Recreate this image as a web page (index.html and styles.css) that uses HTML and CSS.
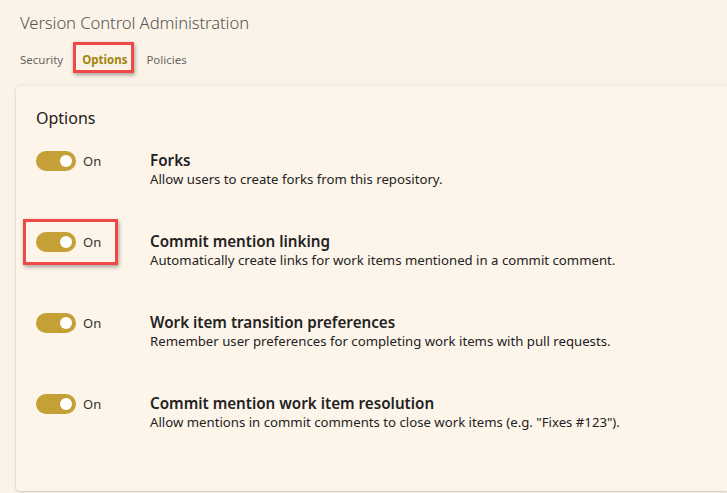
FILE: index.html
```html
<!DOCTYPE html>
<html>
<head>
<meta charset="utf-8">
<link rel="stylesheet" href="styles.css">
</head>
<body>
<div class="page">
  <h1 class="title">Version Control Administration</h1>
  <nav class="tabs">
    <span class="tab">Security</span>
    <span class="tab active">Options<span class="mark mark-tab"></span></span>
    <span class="tab">Policies</span>
  </nav>
  <section class="card">
    <h2 class="card-title">Options</h2>
    <div class="row">
      <div class="toggle-col"><span class="toggle"><span class="knob"></span></span><span class="on">On</span></div>
      <div class="text-col">
        <div class="opt-title">Forks</div>
        <div class="opt-desc">Allow users to create forks from this repository.</div>
      </div>
    </div>
    <div class="row">
      <div class="toggle-col"><span class="toggle"><span class="knob"></span></span><span class="on">On</span><span class="mark mark-toggle"></span></div>
      <div class="text-col">
        <div class="opt-title">Commit mention linking</div>
        <div class="opt-desc">Automatically create links for work items mentioned in a commit comment.</div>
      </div>
    </div>
    <div class="row">
      <div class="toggle-col"><span class="toggle"><span class="knob"></span></span><span class="on">On</span></div>
      <div class="text-col">
        <div class="opt-title">Work item transition preferences</div>
        <div class="opt-desc">Remember user preferences for completing work items with pull requests.</div>
      </div>
    </div>
    <div class="row">
      <div class="toggle-col"><span class="toggle"><span class="knob"></span></span><span class="on">On</span></div>
      <div class="text-col">
        <div class="opt-title">Commit mention work item resolution</div>
        <div class="opt-desc">Allow mentions in commit comments to close work items (e.g. "Fixes #123").</div>
      </div>
    </div>
  </section>
</div>
</body>
</html>
```
FILE: styles.css
```css
* { box-sizing: border-box; }
html, body { margin: 0; padding: 0; }
body {
  background: #fbf3e7;
  font-family: "Noto Sans", "Open Sans", sans-serif;
  color: #222;
  width: 727px;
  height: 493px;
  overflow: hidden;
}
.page {
  display: flex;
  flex-direction: column;
  height: 493px;
}
.title {
  margin: 0;
  padding: 11px 0 0 20px;
  font-size: 16.7px;
  font-weight: 300;
  color: #555;
  line-height: 24px;
  letter-spacing: -0.1px;
}
.tabs {
  display: flex;
  gap: 0;
  padding: 17px 0 0 20px;
  height: 51px;
  font-size: 11.5px;
  line-height: 16px;
}
.tab {
  position: relative;
  color: #666;
  margin-right: 19px;
}
.tab.active {
  font-weight: 700;
  color: #a3820f;
}
.mark {
  position: absolute;
  border: 3px solid #f04848;
  box-shadow: 1px 2px 4px rgba(0,0,0,0.35);
  pointer-events: none;
}
.mark-tab {
  left: -9px;
  top: -10px;
  width: 61px;
  height: 31px;
}
.card {
  margin-left: 16px;
  flex: 1;
  margin-bottom: 2px;
  background: #fdf5ea;
  border-radius: 4px 0 0 4px;
  box-shadow: 0 0 3px rgba(0,0,0,0.12), 0 1px 2px rgba(0,0,0,0.12);
  padding: 20px 0 0 20px;
}
.card-title {
  margin: 0 0 17px 0;
  font-size: 16px;
  font-weight: 400;
  line-height: 24px;
  color: #222;
}
.row {
  display: flex;
  align-items: flex-start;
  height: 81px;
}
.toggle-col {
  position: relative;
  width: 114px;
  display: flex;
  align-items: center;
  height: 20px;
  margin-top: 4px;
}
.toggle {
  width: 40px;
  height: 20px;
  border-radius: 10px;
  background: #c4a036;
  display: flex;
  align-items: center;
  justify-content: flex-end;
  padding-right: 4px;
}
.knob {
  width: 12px;
  height: 12px;
  border-radius: 50%;
  background: #fff;
}
.on {
  margin-left: 7px;
  font-size: 13px;
  color: #333;
}
.mark-toggle {
  left: -13px;
  top: -13px;
  width: 95px;
  height: 46px;
}
.text-col {
  display: flex;
  flex-direction: column;
}
.opt-title {
  font-size: 15.2px;
  font-weight: 600;
  line-height: 20px;
  margin-top: 3px;
  color: #222;
}
.opt-desc {
  font-size: 13.2px;
  line-height: 18px;
  color: #222;
}
```
